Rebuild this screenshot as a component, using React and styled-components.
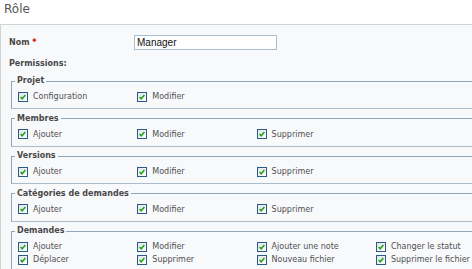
import React from 'react'
import styled, { createGlobalStyle } from 'styled-components'

const GlobalStyle = createGlobalStyle`
  html, body {
    margin: 0;
    padding: 0;
    background: #fff;
    overflow: hidden;
  }
  body {
    font-family: "DejaVu Sans", Verdana, sans-serif;
    color: #505050;
  }
`

const Page = styled.div`
  width: 100%;
  overflow: hidden;
`

const Title = styled.h2`
  margin: 0 0 7px;
  padding: 1px 0 0 4px;
  font-size: 12px;
  line-height: 16px;
  font-weight: normal;
  color: #555;
`

const Box = styled.div`
  width: 520px;
  background: #f8f9fb;
  border-top: 1px solid #d3d3d3;
  border-left: 1px solid #d3d3d3;
  padding: 10px 0 0 8px;
`

const FormRow = styled.div`
  display: flex;
  align-items: center;
  height: 15px;
`

const Label = styled.label`
  width: 125px;
  font-size: 8px;
  line-height: 10px;
  font-weight: bold;
  color: #484848;

  span {
    color: #c00;
  }
`

const TextInput = styled.input`
  box-sizing: border-box;
  width: 143px;
  height: 15px;
  margin: 0;
  padding: 0 2px;
  border: 1px solid #a9bdd2;
  background: #fff;
  font-family: "Liberation Sans", Arial, sans-serif;
  font-size: 10px;
  color: #111;
  outline: none;
`

const SectionLabel = styled.div`
  margin-top: 9px;
  font-size: 8px;
  line-height: 10px;
  font-weight: bold;
  color: #484848;
`

const Groups = styled.div`
  margin: 7px 0 0 2px;
`

const Group = styled.fieldset`
  margin: 0 0 4.5px;
  padding: 4px 0 5px 6px;
  border: none;
  border-top: 1px solid #90a6bd;
  border-left: 1px solid #90a6bd;
  border-bottom: 1px solid #a9bbcd;
  min-width: 0;
`

const Legend = styled.legend`
  margin-left: -3px;
  padding: 0 2px;
  font-size: 8px;
  line-height: 10px;
  font-weight: bold;
  color: #484848;
`

const Grid = styled.div`
  display: grid;
  grid-template-columns: repeat(4, 119.3px);
  grid-auto-rows: 13px;
`

const Item = styled.label`
  display: flex;
  align-items: center;
  gap: 5px;
  font-size: 8px;
  line-height: 13px;
  color: #505050;
  white-space: nowrap;
`

const Check = () => (
  <svg width="10" height="10" viewBox="0 0 10 10" style={{ flex: 'none' }}>
    <defs>
      <linearGradient id="cb" x1="0" y1="0" x2="1" y2="1">
        <stop offset="0" stopColor="#dfe4ea" />
        <stop offset="1" stopColor="#ffffff" />
      </linearGradient>
    </defs>
    <rect x="0.5" y="0.5" width="9" height="9" fill="url(#cb)" stroke="#2c5a87" />
    <path d="M2.6 5 L4.2 6.8 L7.4 3.1" fill="none" stroke="#23a21a" strokeWidth="1.6" />
  </svg>
)

const groups = [
  { name: 'Projet', items: ['Configuration', 'Modifier'] },
  { name: 'Membres', items: ['Ajouter', 'Modifier', 'Supprimer'] },
  { name: 'Versions', items: ['Ajouter', 'Modifier', 'Supprimer'] },
  { name: 'Catégories de demandes', items: ['Ajouter', 'Modifier', 'Supprimer'] },
  {
    name: 'Demandes',
    items: [
      'Ajouter', 'Modifier', 'Ajouter une note', 'Changer le statut',
      'Déplacer', 'Supprimer', 'Nouveau fichier', 'Supprimer le fichier',
    ],
  },
]

export default function App() {
  return (
    <Page>
      <GlobalStyle />
      <Title>Rôle</Title>
      <Box>
        <FormRow>
          <Label>Nom <span>*</span></Label>
          <TextInput defaultValue="Manager" />
        </FormRow>
        <SectionLabel>Permissions:</SectionLabel>
        <Groups>
          {groups.map(g => (
            <Group key={g.name}>
              <Legend>{g.name}</Legend>
              <Grid>
                {g.items.map((it, i) => (
                  <Item key={i}><Check />{it}</Item>
                ))}
              </Grid>
            </Group>
          ))}
        </Groups>
      </Box>
    </Page>
  )
}
